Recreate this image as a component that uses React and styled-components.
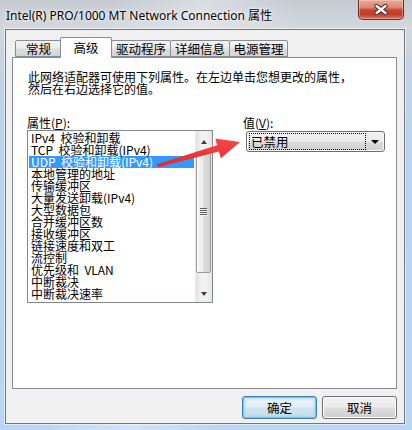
import React from "react";
import styled, { createGlobalStyle } from "styled-components";

const Global = createGlobalStyle`
  html, body { margin: 0; padding: 0; background: #b9d3ee; }
  #root { width: 412px; height: 430px; overflow: hidden; }
`;

const Window = styled.div`
  position: relative;
  width: 412px;
  height: 430px;
  box-sizing: border-box;
  display: flex;
  flex-direction: column;
  padding: 0 7px 6px 5px;
  background:
    linear-gradient(100deg, rgba(255,255,255,0) 22%, rgba(255,255,255,0.35) 42%, rgba(255,255,255,0) 62%),
    linear-gradient(180deg, #c4cad0 0px, #d3d8dd 28px, #c6d3e1 60px, #bad3ee 150px, #b9d6f4 100%);
  font-family: "Noto Sans CJK SC", sans-serif;
  color: #000;
`;

const TitleBar = styled.div`
  height: 29px;
  flex: none;
  display: flex;
  align-items: flex-start;
  justify-content: space-between;
  padding-left: 1px;
`;

const Title = styled.div`
  margin-top: 8px;
  font-family: "Noto Sans", "Noto Sans CJK SC", sans-serif;
  font-size: 12px;
  line-height: 16px;
  color: #000;
  text-shadow: 0 0 5px rgba(255,255,255,0.95), 0 0 2px rgba(255,255,255,0.9);
  white-space: nowrap;
`;

const CloseButton = styled.div`
  width: 46px;
  height: 20px;
  margin-right: 1px;
  box-sizing: border-box;
  border: 1px solid #6b2a22;
  border-top: none;
  border-radius: 0 0 5px 5px;
  background: linear-gradient(180deg, #e9a899 0%, #dc8b79 38%, #c9472f 52%, #c23c25 75%, #d87a62 100%);
  box-shadow: inset 0 0 0 1px rgba(255, 215, 205, 0.45);
  display: flex;
  align-items: center;
  justify-content: center;
`;

const Client = styled.div`
  flex: 1;
  display: flex;
  flex-direction: column;
  box-sizing: border-box;
  border: 1px solid #6e7985;
  box-shadow: 0 0 0 1px rgba(255,255,255,0.55);
  background: #f0f0f0;
  padding: 7px 7px 4px 6px;
`;

const TabStrip = styled.div`
  height: 20px;
  flex: none;
  display: flex;
  align-items: flex-end;
  padding-left: 3px;
`;

const Tab = styled.div`
  position: relative;
  box-sizing: border-box;
  width: ${(p) => p.$w}px;
  height: ${(p) => (p.$active ? 21 : 17)}px;
  margin-left: ${(p) => (p.$active ? -2 : p.$first ? 0 : -1)}px;
  margin-bottom: ${(p) => (p.$active ? -1 : 0)}px;
  z-index: ${(p) => (p.$active ? 2 : 1)};
  border: 1px solid #898c95;
  border-bottom: ${(p) => (p.$active ? "none" : "1px solid #898c95")};
  border-radius: 2px 2px 0 0;
  background: ${(p) =>
    p.$active ? "#ffffff" : "linear-gradient(180deg, #f3f3f3 0%, #ebebeb 48%, #dedede 52%, #d5d5d5 100%)"};
  display: flex;
  align-items: ${(p) => (p.$active ? "flex-start" : "center")};
  justify-content: center;
  padding-top: ${(p) => (p.$active ? 3 : 0)}px;
  font-size: 12.5px;
  line-height: 14px;
  white-space: nowrap;
`;

const Panel = styled.div`
  flex: 1;
  box-sizing: border-box;
  border: 1px solid #898c95;
  background: #fff;
  padding: 13px 14px 0 14px;
  display: flex;
  flex-direction: column;
`;

const Description = styled.div`
  margin-left: 1px;
  font-size: 12px;
  line-height: 12px;
  white-space: nowrap;
`;

const PropRow = styled.div`
  margin-top: 20px;
  display: flex;
  align-items: flex-start;
`;

const LeftCol = styled.div`
  width: 186px;
  display: flex;
  flex-direction: column;
`;

const RightCol = styled.div`
  margin-left: 30px;
  display: flex;
  flex-direction: column;
`;

const Label = styled.div`
  font-size: 12px;
  line-height: 15px;
  height: 15px;
  white-space: nowrap;
`;

const ListBox = styled.div`
  width: 186px;
  height: 173px;
  box-sizing: border-box;
  border: 1px solid #828790;
  display: flex;
  background: #fff;
`;

const Items = styled.div`
  width: 167px;
  box-sizing: border-box;
  padding: 1px;
  overflow: hidden;
`;

const Item = styled.div`
  height: 12px;
  line-height: 12px;
  font-size: 12px;
  padding-left: 2px;
  white-space: pre;
  background: ${(p) => (p.$selected ? "#3399ff" : "transparent")};
  color: ${(p) => (p.$selected ? "#fff" : "#000")};
`;

const ScrollBar = styled.div`
  width: 17px;
  display: flex;
  flex-direction: column;
  background: linear-gradient(90deg, #e3e3e3 0%, #f2f2f2 35%, #f2f2f2 65%, #e6e6e6 100%);
  border-left: 1px solid #e9e9e9;
  box-sizing: border-box;
`;

const ScrollBtn = styled.div`
  height: 17px;
  flex: none;
  display: flex;
  justify-content: center;
  align-items: center;
  box-sizing: border-box;
  padding-top: ${(p) => (p.$up ? 4 : 0)}px;
`;

const Arrow = styled.div`
  width: 0;
  height: 0;
  border-left: ${(p) => p.$size}px solid transparent;
  border-right: ${(p) => p.$size}px solid transparent;
  ${(p) =>
    p.$dir === "up"
      ? `border-bottom: ${p.$h}px solid ${p.$color};`
      : `border-top: ${p.$h}px solid ${p.$color};`}
`;

const Thumb = styled.div`
  margin: 3px 0 0 0;
  width: 15px;
  height: 122px;
  box-sizing: border-box;
  border: 1px solid #9c9c9c;
  border-radius: 2px;
  background: linear-gradient(90deg, #f7f7f7 0%, #ececec 45%, #dcdcdc 55%, #d2d2d2 100%);
  box-shadow: inset 1px 1px 0 #ffffff;
  display: flex;
  align-items: center;
  justify-content: center;
`;

const Grip = styled.div`
  width: 7px;
  height: 8px;
  background: repeating-linear-gradient(180deg, #5e5e5e 0px, #5e5e5e 1px, #f4f4f4 1px, #f4f4f4 2px);
`;

const Spacer = styled.div`
  flex: 1;
`;

const Combo = styled.div`
  margin: 1px 0 0 3px;
  width: 139px;
  height: 21px;
  box-sizing: border-box;
  border: 1px solid #707070;
  border-radius: 3px;
  background: linear-gradient(180deg, #f2f2f2 0%, #ebebeb 48%, #dddddd 52%, #cfcfcf 100%);
  box-shadow: inset 0 0 0 1px #fbfbfb;
  display: flex;
  align-items: stretch;
`;

const FocusRect = styled.div`
  flex: 1;
  margin: 1px 0 1px 2px;
  border: 1px dotted #000;
  padding-left: 1px;
  font-size: 12.5px;
  line-height: 15px;
  white-space: nowrap;
`;

const ComboArrow = styled.div`
  width: 18px;
  display: flex;
  align-items: center;
  justify-content: center;
  padding-top: 1px;
`;

const ButtonRow = styled.div`
  margin-top: 7px;
  display: flex;
  justify-content: flex-end;
  gap: 5px;
`;

const Button = styled.div`
  width: 75px;
  height: 23px;
  box-sizing: border-box;
  border-radius: 3px;
  border: 1px solid ${(p) => (p.$default ? "#3c7fb1" : "#707070")};
  background: ${(p) =>
    p.$default
      ? "linear-gradient(180deg, #eef6fb 0%, #e2eef5 48%, #d2e4ee 52%, #c6dbe7 100%)"
      : "linear-gradient(180deg, #f2f2f2 0%, #ebebeb 48%, #dddddd 52%, #cfcfcf 100%)"};
  box-shadow: ${(p) =>
    p.$default
      ? "inset 0 0 0 1px #66cdf6, inset 0 0 3px 2px rgba(150, 215, 245, 0.7)"
      : "inset 0 0 0 1px #fcfcfc"};
  display: flex;
  align-items: center;
  justify-content: center;
  font-size: 12.5px;
  line-height: 14px;
`;

const Overlay = styled.svg`
  position: absolute;
  left: 0;
  top: 0;
  pointer-events: none;
`;

const tabs = [
  { label: "常规", w: 47 },
  { label: "高级", w: 52, active: true },
  { label: "驱动程序", w: 60 },
  { label: "详细信息", w: 60 },
  { label: "电源管理", w: 59 },
];

const items = [
  "IPv4  校验和卸载",
  "TCP  校验和卸载(IPv4)",
  "UDP  校验和卸载(IPv4)",
  "本地管理的地址",
  "传输缓冲区",
  "大量发送卸载(IPv4)",
  "大型数据包",
  "合并缓冲区数",
  "接收缓冲区",
  "链接速度和双工",
  "流控制",
  "优先级和  VLAN",
  "中断裁决",
  "中断裁决速率",
];

export default function App() {
  return (
    <>
      <Global />
      <Window>
        <TitleBar>
          <Title>Intel(R) PRO/1000 MT Network Connection 属性</Title>
          <CloseButton>
            <svg width="14" height="11" viewBox="0 0 14 11">
              <path d="M2.5 2 L11.5 9 M11.5 2 L2.5 9" stroke="#3a2a28" strokeWidth="4.2" strokeLinecap="round" />
              <path d="M2.5 2 L11.5 9 M11.5 2 L2.5 9" stroke="#ffffff" strokeWidth="2.3" strokeLinecap="round" />
            </svg>
          </CloseButton>
        </TitleBar>
        <Client>
          <TabStrip>
            {tabs.map((t, i) => (
              <Tab key={t.label} $w={t.w} $active={t.active} $first={i === 0}>
                {t.label}
              </Tab>
            ))}
          </TabStrip>
          <Panel>
            <Description>
              此网络适配器可使用下列属性。在左边单击您想更改的属性，
              <br />
              然后在右边选择它的值。
            </Description>
            <PropRow>
              <LeftCol>
                <Label>
                  属性(<u>P</u>):
                </Label>
                <ListBox>
                  <Items>
                    {items.map((it, i) => (
                      <Item key={it} $selected={i === 2}>
                        {it}
                      </Item>
                    ))}
                  </Items>
                  <ScrollBar>
                    <ScrollBtn $up>
                      <Arrow $dir="up" $size={3.5} $h={4} $color="#3d3d3d" />
                    </ScrollBtn>
                    <Thumb>
                      <Grip />
                    </Thumb>
                    <Spacer />
                    <ScrollBtn>
                      <Arrow $dir="down" $size={3.5} $h={4} $color="#3d3d3d" />
                    </ScrollBtn>
                  </ScrollBar>
                </ListBox>
              </LeftCol>
              <RightCol>
                <Label>
                  值(<u>V</u>):
                </Label>
                <Combo>
                  <FocusRect>已禁用</FocusRect>
                  <ComboArrow>
                    <Arrow $dir="down" $size={4} $h={4} $color="#000" />
                  </ComboArrow>
                </Combo>
              </RightCol>
            </PropRow>
          </Panel>
          <ButtonRow>
            <Button $default>确定</Button>
            <Button>取消</Button>
          </ButtonRow>
        </Client>
        <Overlay width="412" height="430" viewBox="0 0 412 430">
          <defs>
            <linearGradient id="arrowFill" x1="0" y1="0" x2="0" y2="1">
              <stop offset="0" stopColor="#f34a45" />
              <stop offset="1" stopColor="#e8262a" />
            </linearGradient>
          </defs>
          <polygon
            points="157,164.3 217.1,145.2 215.3,138.6 240,142 220.9,158.3 218.9,151.6 157.6,167.3"
            fill="url(#arrowFill)"
          />
        </Overlay>
      </Window>
    </>
  );
}
